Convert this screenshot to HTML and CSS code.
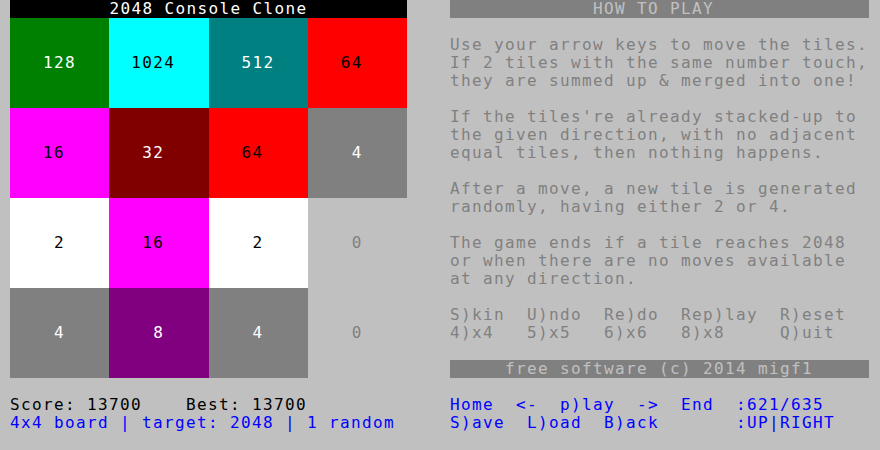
FILE: index.html
```html
<!DOCTYPE html>
<html>
<head>
<meta charset="utf-8">
<title>2048 Console Clone</title>
<link rel="stylesheet" href="styles.css">
</head>
<body>
<div class="screen">
  <div class="top">
    <div class="left">
      <div class="title">2048 Console Clone</div>
      <div class="board">
        <div class="tile t128">   128</div>
        <div class="tile t1024">  1024</div>
        <div class="tile t512">   512</div>
        <div class="tile t64">   64</div>
        <div class="tile t16">   16</div>
        <div class="tile t32">   32</div>
        <div class="tile t64">   64</div>
        <div class="tile t4">    4</div>
        <div class="tile t2">    2</div>
        <div class="tile t16">   16</div>
        <div class="tile t2">    2</div>
        <div class="tile t0">    0</div>
        <div class="tile t4">    4</div>
        <div class="tile t8">    8</div>
        <div class="tile t4">    4</div>
        <div class="tile t0">    0</div>
      </div>
    </div>
    <div class="help">
      <div class="bar">             HOW TO PLAY</div>
      <pre class="text">Use your arrow keys to move the tiles.
If 2 tiles with the same number touch,
they are summed up &amp; merged into one!

If the tiles're already stacked-up to
the given direction, with no adjacent
equal tiles, then nothing happens.

After a move, a new tile is generated
randomly, having either 2 or 4.

The game ends if a tile reaches 2048
or when there are no moves available
at any direction.

S)kin  U)ndo  Re)do  Rep)lay  R)eset
4)x4   5)x5   6)x6   8)x8     Q)uit</pre>
      <div class="bar">     free software (c) 2014 migf1</div>
    </div>
  </div>
  <div class="bottom">
    <pre class="status"><span class="black">Score: 13700    Best: 13700</span>
<span class="blue">4x4 board | target: 2048 | 1 random</span></pre>
    <pre class="nav">Home  &lt;-  p)lay  -&gt;  End  :621/635
S)ave  L)oad  B)ack       :UP|RIGHT</pre>
  </div>
</div>
</body>
</html>
```
FILE: styles.css
```css
html, body {
  margin: 0;
  padding: 0;
  background: #c0c0c0;
}
.screen {
  width: 880px;
  height: 450px;
  padding-left: 10px;
  box-sizing: border-box;
  font-family: "DejaVu Sans Mono", monospace;
  font-size: 16px;
  letter-spacing: 1.37px;
  line-height: 18px;
}
pre {
  margin: 0;
  font: inherit;
  letter-spacing: inherit;
  white-space: pre;
}
.top {
  display: flex;
  gap: 43px;
}
.left {
  width: 397px;
}
.title {
  height: 18px;
  background: #000;
  color: #fff;
  text-align: center;
}
.board {
  display: grid;
  grid-template-columns: repeat(4, 99.25px);
  grid-auto-rows: 90px;
}
.tile {
  display: flex;
  align-items: center;
  color: #fff;
  white-space: pre;
}
.t128 { background: #008000; }
.t1024 { background: #00ffff; color: #000; }
.t512 { background: #008080; }
.t64 { background: #ff0000; color: #000; }
.t16 { background: #ff00ff; color: #000; }
.t32 { background: #800000; }
.t4 { background: #808080; }
.t2 { background: #ffffff; color: #000; }
.t8 { background: #800080; }
.t0 { background: #c0c0c0; color: #808080; }
.help {
  width: 419px;
}
.bar {
  height: 18px;
  background: #808080;
  color: #c0c0c0;
  white-space: pre;
}
.text {
  color: #808080;
  margin: 18px 0;
}
.bottom {
  display: flex;
  margin-top: 18px;
}
.status {
  width: 440px;
}
.black { color: #000; }
.blue { color: #0000ff; }
.nav {
  color: #0000ff;
}
```
